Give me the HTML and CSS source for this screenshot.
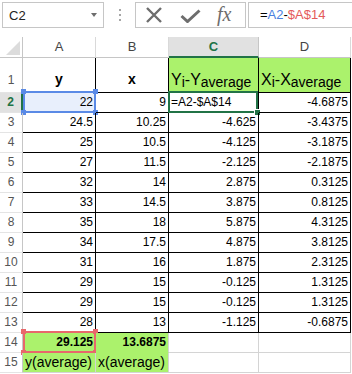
FILE: index.html
```html
<!DOCTYPE html>
<html>
<head>
<meta charset="utf-8">
<link rel="stylesheet" href="styles.css">
</head>
<body>
<div class="app">
  <div class="fbar">
    <div class="namebox"><span class="name">C2</span><span class="caret"></span></div>
    <div class="grip"><i></i><i></i><i></i></div>
    <div class="btns">
      <svg class="ico-x" width="18" height="16" viewBox="0 0 18 16"><path d="M2 1 L16 15 M16 1 L2 15" stroke="#6d6d6d" stroke-width="2.4" fill="none"/></svg>
      <svg class="ico-ok" width="21" height="14" viewBox="0 0 21 14"><path d="M1.5 7 L7.5 12.5 L19.5 1.5" stroke="#6d6d6d" stroke-width="3" fill="none"/></svg>
      <span class="fx">fx</span>
    </div>
    <div class="formula">=<span class="r1">A2</span>-<span class="r2">$A$14</span></div>
  </div>

  <div class="sheet">
    <div class="corner"><svg width="14" height="14" viewBox="0 0 14 14"><path d="M14 0 L14 14 L0 14 Z" fill="#dcdcdc"/></svg></div>
    <div class="ch">A</div><div class="ch">B</div><div class="ch sel">C</div><div class="ch">D</div>

    <div class="rh tall">1</div>
    <div class="c b hd"><span>y</span></div>
    <div class="c b hd"><span>x</span></div>
    <div class="c b g lab">Y<sub>i</sub>-Y<sub>average</sub></div>
    <div class="c b g lab">X<sub>i</sub>-X<sub>average</sub></div>

    <div class="rh sel">2</div>
    <div class="c b n a2">22<span class="ref blue"><i class="tl"></i><i class="tr"></i><i class="bl"></i><i class="br"></i></span></div>
    <div class="c b n">9</div>
    <div class="c b t">=A2-$A$14<span class="active"><i></i></span></div>
    <div class="c b n">-4.6875</div>

    <div class="rh">3</div><div class="c b n">24.5</div><div class="c b n">10.25</div><div class="c b n">-4.625</div><div class="c b n">-3.4375</div>
    <div class="rh">4</div><div class="c b n">25</div><div class="c b n">10.5</div><div class="c b n">-4.125</div><div class="c b n">-3.1875</div>
    <div class="rh">5</div><div class="c b n">27</div><div class="c b n">11.5</div><div class="c b n">-2.125</div><div class="c b n">-2.1875</div>
    <div class="rh">6</div><div class="c b n">32</div><div class="c b n">14</div><div class="c b n">2.875</div><div class="c b n">0.3125</div>
    <div class="rh">7</div><div class="c b n">33</div><div class="c b n">14.5</div><div class="c b n">3.875</div><div class="c b n">0.8125</div>
    <div class="rh">8</div><div class="c b n">35</div><div class="c b n">18</div><div class="c b n">5.875</div><div class="c b n">4.3125</div>
    <div class="rh">9</div><div class="c b n">34</div><div class="c b n">17.5</div><div class="c b n">4.875</div><div class="c b n">3.8125</div>
    <div class="rh">10</div><div class="c b n">31</div><div class="c b n">16</div><div class="c b n">1.875</div><div class="c b n">2.3125</div>
    <div class="rh">11</div><div class="c b n">29</div><div class="c b n">15</div><div class="c b n">-0.125</div><div class="c b n">1.3125</div>
    <div class="rh">12</div><div class="c b n">29</div><div class="c b n">15</div><div class="c b n">-0.125</div><div class="c b n">1.3125</div>
    <div class="rh">13</div><div class="c b n">28</div><div class="c b n">13</div><div class="c b n">-1.125</div><div class="c b n">-0.6875</div>

    <div class="rh">14</div>
    <div class="c g n bold nob">29.125<span class="ref pink"><i class="tl"></i><i class="tr"></i><i class="bl"></i><i class="br"></i></span></div>
    <div class="c g n bold nob">13.6875</div>
    <div class="c"></div><div class="c"></div>

    <div class="rh">15</div>
    <div class="c g t txt">y(average)</div>
    <div class="c g t txt">x(average)</div>
    <div class="c"></div><div class="c"></div>
  </div>
</div>
</body>
</html>
```

FILE: styles.css
```css
html, body {
  margin: 0;
  padding: 0;
  background: #ffffff;
}
.app {
  width: 352px;
  height: 374px;
  overflow: hidden;
  font-family: "Liberation Sans", Arial, sans-serif;
  color: #000;
}

/* formula bar */
.fbar {
  height: 37px;
  display: flex;
  align-items: flex-start;
  padding-top: 2px;
  box-sizing: border-box;
}
.namebox {
  margin-left: 2px;
  width: 102px;
  height: 26px;
  box-sizing: border-box;
  border: 1px solid #c6c6c6;
  display: flex;
  align-items: center;
  justify-content: space-between;
  padding: 0 6px 0 6px;
  font-size: 13px;
  color: #222;
}
.caret {
  width: 0;
  height: 0;
  border-left: 3.5px solid transparent;
  border-right: 3.5px solid transparent;
  border-top: 4px solid #6d6d6d;
}
.grip {
  width: 31px;
  height: 26px;
  display: flex;
  flex-direction: column;
  align-items: center;
  justify-content: center;
  gap: 3px;
}
.grip i {
  display: block;
  width: 2px;
  height: 2px;
  background: #a6a6a6;
}
.btns {
  width: 111px;
  height: 26px;
  box-sizing: border-box;
  border: 1px solid #c6c6c6;
  display: flex;
  align-items: center;
  padding-left: 9px;
}
.ico-ok { margin-left: 17px; margin-top: 1px; }
.fx {
  margin-left: 16px;
  font-family: "Liberation Serif", "Times New Roman", serif;
  font-style: italic;
  font-size: 20px;
  color: #6d6d6d;
  line-height: 1;
  margin-top: -2px;
}
.formula {
  margin-left: 2px;
  flex: 1;
  height: 26px;
  box-sizing: border-box;
  border: 1px solid #c6c6c6;
  border-right: none;
  padding-left: 11px;
  font-size: 13px;
  line-height: 24px;
  color: #000;
}
.r1 { color: #4a7fe0; }
.r2 { color: #e45a5a; }

/* sheet grid */
.sheet {
  display: grid;
  grid-template-columns: 23px 73px 73px 90px 92px;
  grid-template-rows: 21px 35px repeat(14, 20px);
  width: 351px;
}
.sheet > div {
  box-sizing: border-box;
  position: relative;
  min-width: 0;
}
.corner {
  border-right: 1px solid #c6c6c6;
  border-bottom: 1px solid #c6c6c6;
  display: flex;
  align-items: flex-end;
  justify-content: flex-end;
  padding: 0 2px 2px 0;
}
.corner svg { display: block; }
.ch {
  border-right: 1px solid #d9d9d9;
  border-bottom: 1px solid #c6c6c6;
  text-align: center;
  font-size: 13px;
  line-height: 20px;
  color: #444;
}
.ch.sel {
  background: #e1e1e1;
  color: #217346;
  font-weight: bold;
  border-bottom: 2px solid #217346;
  border-right-color: #c6c6c6;
}
.rh {
  border-right: 1px solid #c6c6c6;
  border-bottom: 1px solid #e4e4e4;
  text-align: center;
  font-size: 12px;
  line-height: 19px;
  color: #555;
}
.rh.tall {
  display: flex;
  align-items: flex-end;
  justify-content: center;
  padding-bottom: 2px;
}
.rh.sel {
  background: #e1e1e1;
  color: #217346;
  font-weight: bold;
  border-right: 2px solid #217346;
}
.c {
  border-right: 1px solid #d4d4d4;
  border-bottom: 1px solid #d4d4d4;
  font-size: 12px;
  line-height: 19px;
  white-space: nowrap;
}
.c.b {
  border-right-color: #000;
  border-bottom-color: #000;
}
.c.g { background: #abf26c; }
.c.nob { border-bottom-color: transparent; }
.n { text-align: right; padding-right: 2px; }
.t { text-align: left; padding-left: 2px; }
.txt { font-size: 14px; }
.bold { font-weight: bold; }
.hd {
  display: flex;
  align-items: flex-end;
  justify-content: center;
  font-weight: bold;
  font-size: 14px;
  padding-bottom: 3px;
}
.lab {
  display: flex;
  align-items: flex-end;
  padding: 0 0 3px 2px;
  font-size: 16px;
  line-height: 19px;
}
.lab sub {
  font-size: 14px;
  vertical-align: -1px;
  line-height: 1;
}
.a2 { background: #e8effc; }

/* reference and active outlines */
.ref {
  position: absolute;
  top: -2px;
  left: 0;
  right: -1px;
  bottom: -1px;
  border: 2px solid;
}
.ref.blue { border-color: #5a8ae6; }
.ref.pink { border-color: #e8686b; }
.ref i {
  position: absolute;
  width: 5px;
  height: 5px;
}
.ref.blue i { background: #5a8ae6; }
.ref.pink i { background: #e8686b; }
.ref .tl { left: -4px; top: -4px; }
.ref .tr { right: -4px; top: -4px; }
.ref .bl { left: -4px; bottom: -4px; }
.ref .br { right: -4px; bottom: -4px; }
.active {
  position: absolute;
  top: -2px;
  left: -1px;
  right: 0;
  bottom: -1px;
  border: 2px solid #217346;
}
.active i {
  position: absolute;
  right: -4px;
  bottom: -4px;
  width: 5px;
  height: 5px;
  background: #217346;
  box-shadow: 0 0 0 1px #fff;
}
```
